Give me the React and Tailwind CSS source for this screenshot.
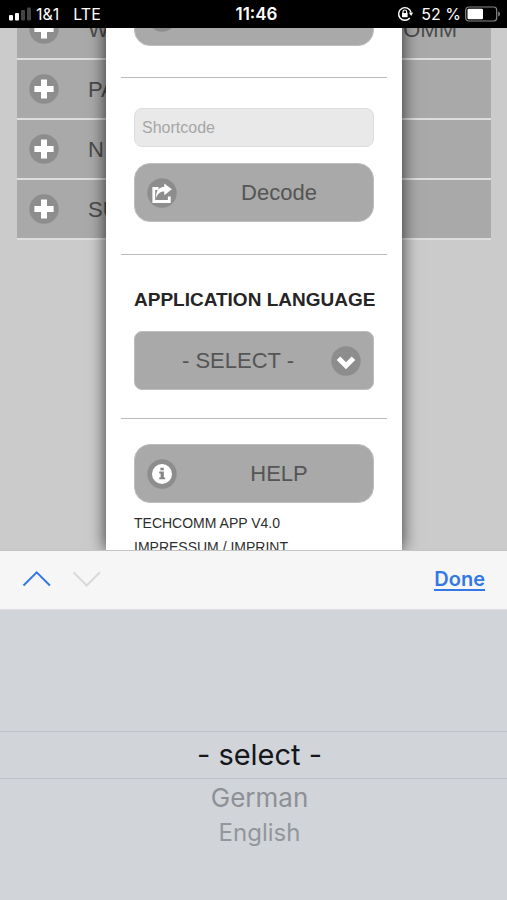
import React, { useState } from "react";

const menuRows = [
  { id: 1, start: "W", end: "OMM" },
  { id: 2, start: "PA", end: "" },
  { id: 3, start: "N", end: "" },
  { id: 4, start: "SU", end: "" },
];

const languages = [
  { value: "", label: "- select -" },
  { value: "de", label: "German" },
  { value: "en", label: "English" },
];

const PlusIcon = () => (
  <svg viewBox="0 0 30 30" className="w-[30px] h-[30px] shrink-0" aria-hidden="true">
    <circle cx="15" cy="15" r="14.7" fill="#8d8d8d" />
    <path d="M12 5.5h6V12h6.6v6H18v6.5h-6V18H5.4V12H12z" fill="#fff" />
  </svg>
);

const ShareIcon = () => (
  <svg viewBox="0 0 30 30" className="w-[30px] h-[30px] shrink-0" aria-hidden="true">
    <circle cx="15" cy="15" r="14.7" fill="#8d8d8d" />
    <path d="M11.500 10.500H6.800v13h15.500v-5" fill="none" stroke="#fff" strokeWidth="2.800" />
    <path
      d="M17.300 5.500 24.800 11.200l-7.500 6v-3.600c-3.500 0-6.500 1.800-8.200 6.300C8.800 12.800 12 9 17.300 8.700z"
      fill="#fff"
    />
  </svg>
);

const InfoIcon = () => (
  <svg viewBox="0 0 30 30" className="w-[30px] h-[30px] shrink-0" aria-hidden="true">
    <circle cx="15" cy="15" r="14.7" fill="#8d8d8d" />
    <circle cx="15" cy="15" r="10" fill="#fff" />
    <path
      d="M13.400 8.800h3.400v2.500h-3.400zM12.200 12.600h4.600v6h1.400v1.700h-6v-1.700h1.400v-4.200h-1.400z"
      fill="#858585"
    />
  </svg>
);

const ChevronIcon = () => (
  <svg viewBox="0 0 30 30" className="w-[30px] h-[30px]" aria-hidden="true">
    <circle cx="15" cy="15" r="14.7" fill="#8d8d8d" />
    <path d="M7.500 12.300l7.500 7.400 7.500-7.400" fill="none" stroke="#fff" strokeWidth="5" />
  </svg>
);

const StatusBar = () => (
  <header className="grid grid-cols-3 items-center h-7 shrink-0 pl-2 pr-1.5 bg-black text-white font-['Inter',sans-serif] text-base leading-7">
    <div className="flex items-center">
      {/* Señal */}
      <svg viewBox="0 0 24 14" className="w-6 h-[14px] mr-1" aria-hidden="true">
        <rect x="1" y="8" width="4" height="5.500" rx="1" fill="#fff" />
        <rect x="7" y="6" width="4" height="7.500" rx="1" fill="#fff" />
        <rect x="13" y="3" width="4" height="10.500" rx="1" fill="#444" />
        <rect x="19" y="0.500" width="4" height="13" rx="1" fill="#444" />
      </svg>
      <span className="mr-3.5">1&amp;1</span>
      <span>LTE</span>
    </div>
    <span className="pl-1 text-center text-[17px] font-semibold">11:46</span>
    <div className="flex items-center justify-end">
      {/* Bloqueo de rotación */}
      <svg viewBox="0 0 16 16" className="w-4 h-4 mr-2" fill="none" stroke="#fff" aria-hidden="true">
        <path d="M14 6.200A6.300 6.300 0 1 0 12.800 12" strokeWidth="1.400" />
        <path d="M11.800 6.600h4.200l-1.800 3.400z" fill="#fff" stroke="none" />
        <rect x="5" y="7" width="5.600" height="4.200" fill="#fff" stroke="none" />
        <path d="M6 7.500V5.800a1.800 1.800 0 0 1 3.600 0v1.700" strokeWidth="1.200" />
      </svg>
      <span className="mr-1">52 %</span>
      <svg viewBox="0 0 36 16" className="w-9 h-4" aria-hidden="true">
        <rect x="0.700" y="1" width="31" height="14" rx="3" fill="none" stroke="#888" strokeWidth="1.200" />
        <rect x="2.500" y="2.800" width="15.500" height="10.400" rx="1.200" fill="#fff" />
        <path d="M33.200 5.500c2.400 1 2.400 4 0 5z" fill="#888" />
      </svg>
    </div>
  </header>
);

const PanelButton = ({ icon, children, ...rest }) => (
  <button
    type="button"
    className="flex items-center w-full h-[59px] px-3 rounded-2xl border border-[#bdbdbd] bg-[#a9a9a9] text-[22px] text-[#555]"
    {...rest}
  >
    {icon}
    <span className="flex-1 pl-7 pr-2 text-center">{children}</span>
  </button>
);

const App = () => {
  const [language, setLanguage] = useState("");
  const [code, setCode] = useState("");

  return (
    <div className="flex flex-col h-screen overflow-hidden bg-[#cbcbcb] font-['Liberation_Sans',Arial,sans-serif]">
      <StatusBar />

      <main className="relative flex-1 min-h-0 overflow-hidden">
        {/* Menú de fondo */}
        <ul className="-mt-7 pl-[17px] pr-4">
          {menuRows.map((row) => (
            <li
              key={row.id}
              className="flex items-center h-[60px] pl-3 pr-[34px] border-b-2 border-[#dedede] bg-[#a9a9a9] text-[22px] text-[#4c4c4c]"
            >
              <PlusIcon />
              <span className="flex-1 pl-[29px]">{row.start}</span>
              <span>{row.end}</span>
            </li>
          ))}
        </ul>

        {/* Panel lateral */}
        <section className="absolute -top-[41px] bottom-0 left-[106px] right-[105px] px-[15px] bg-white shadow-[0_0_16px_rgba(0,0,0,0.75)]">
          <div className="px-[13px] pb-[31px]">
            <PanelButton icon={<PlusIcon />} aria-label="Add" />
          </div>
          <hr className="border-[#bbb]" />

          <div className="flex flex-col gap-4 px-[13px] pt-[30px] pb-8">
            <input
              type="text"
              aria-label="Shortcode"
              placeholder="Shortcode"
              value={code}
              onChange={(e) => setCode(e.target.value)}
              className="w-full h-[39px] px-[7px] rounded-lg border border-[#dcdcdc] bg-[#e9e9e9] text-base placeholder:text-[#a6a6a6]"
            />
            <PanelButton icon={<ShareIcon />}>Decode</PanelButton>
          </div>
          <hr className="border-[#bbb]" />

          <div className="px-[13px] pt-8 pb-7">
            <label
              htmlFor="language"
              className="block mb-[18px] text-[19px] leading-[26px] font-bold whitespace-nowrap text-[#252525]"
            >
              APPLICATION LANGUAGE
            </label>
            <div className="relative">
              <select
                id="language"
                value={language}
                onChange={(e) => setLanguage(e.target.value)}
                className="block appearance-none w-full h-[59px] pl-3 pr-11 rounded-lg border border-[#bdbdbd] bg-[#a9a9a9] text-[22px] text-[#555] uppercase [text-align-last:center]"
              >
                {languages.map((item) => (
                  <option key={item.value} value={item.value}>
                    {item.label}
                  </option>
                ))}
              </select>
              <span className="absolute inset-y-0 right-[13px] flex items-center pointer-events-none">
                <ChevronIcon />
              </span>
            </div>
          </div>
          <hr className="border-[#bbb]" />

          <div className="px-[13px] pt-[25px]">
            <PanelButton icon={<InfoIcon />}>HELP</PanelButton>
            <p className="pt-2 text-sm leading-6 text-[#2e2e2e]">
              TECHCOMM APP V4.0
              <br />
              <a href="#imprint">IMPRESSUM / IMPRINT</a>
            </p>
          </div>
        </section>
      </main>

      {/* Barra del selector */}
      <div className="flex items-center h-[59px] shrink-0 px-[22px] border-t border-[#c4c4c4] bg-[#f6f6f6]">
        <button type="button" aria-label="Previous" className="mr-5 pb-0.5">
          <svg viewBox="0 0 30 18" className="w-[30px] h-[18px]" fill="none" stroke="#3478e5" strokeWidth="2">
            <path d="M1.500 15.500 14.700 2.300l13.200 13.200" />
          </svg>
        </button>
        <button type="button" aria-label="Next" disabled className="pb-0.5">
          <svg viewBox="0 0 30 18" className="w-[30px] h-[18px]" fill="none" stroke="#d9d9d9" strokeWidth="2">
            <path d="M1.500 2.300l13.200 13.200L27.900 2.300" />
          </svg>
        </button>
        <button
          type="button"
          className="ml-auto border-b-2 border-[#3478e5] font-['Inter',sans-serif] text-[20px] leading-5 font-semibold text-[#3478e5]"
        >
          Done
        </button>
      </div>

      {/* Rueda de idiomas */}
      <div className="flex flex-col h-[291px] shrink-0 pt-[121px] border-t border-[#dcdee1] bg-[#d1d5da] font-['Inter',sans-serif]">
        <button
          type="button"
          onClick={() => setLanguage("")}
          className="h-12 pl-3 border-y border-[#bfc3c9] text-[29px] text-[#15171a]"
        >
          {languages[0].label}
        </button>
        <button
          type="button"
          onClick={() => setLanguage("de")}
          className="h-[38px] pl-3 text-[26px] leading-[38px] text-[#8d9094]"
        >
          {languages[1].label}
        </button>
        <button
          type="button"
          onClick={() => setLanguage("en")}
          className="h-8 pl-3 text-2xl leading-8 text-[#93969a]"
        >
          {languages[2].label}
        </button>
      </div>
    </div>
  );
};

export default App;
